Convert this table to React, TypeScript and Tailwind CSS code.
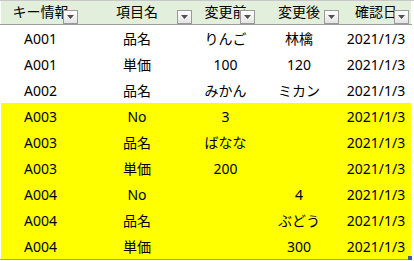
const cols = [
  { title: "キー情報", w: "w-[79px]" },
  { title: "項目名", w: "w-[114px]" },
  { title: "変更前", w: "w-[63px]" },
  { title: "変更後", w: "w-[84px]" },
  { title: "確認日", w: "w-[70px]" },
];

const rows: { cells: string[]; hl: boolean }[] = [
  { cells: ["A001", "品名", "りんご", "林檎", "2021/1/3"], hl: false },
  { cells: ["A001", "単価", "100", "120", "2021/1/3"], hl: false },
  { cells: ["A002", "品名", "みかん", "ミカン", "2021/1/3"], hl: false },
  { cells: ["A003", "No", "3", "", "2021/1/3"], hl: true },
  { cells: ["A003", "品名", "ばなな", "", "2021/1/3"], hl: true },
  { cells: ["A003", "単価", "200", "", "2021/1/3"], hl: true },
  { cells: ["A004", "No", "", "4", "2021/1/3"], hl: true },
  { cells: ["A004", "品名", "", "ぶどう", "2021/1/3"], hl: true },
  { cells: ["A004", "単価", "", "300", "2021/1/3"], hl: true },
];

const FilterButton = () => (
  <div className="absolute right-[2px] bottom-0 w-[15px] h-[14px] border border-[#9a9a9a] bg-gradient-to-b from-white to-[#e4e4e4] flex items-center justify-center">
    <svg width="7" height="4" viewBox="0 0 7 4">
      <path d="M0 0h7L3.5 4z" fill="#505050" />
    </svg>
  </div>
);

export default function App() {
  return (
    <div
      className="w-[414px] h-[261px] bg-white overflow-hidden text-black text-[14px]"
      style={{ fontFamily: '"Noto Sans", "Noto Sans CJK JP", sans-serif' }}
    >
      <div className="flex h-[24px] border-t border-[#c8c8c8]">
        <div className="w-[1px]" />
        {cols.map((c) => (
          <div key={c.title} className={`${c.w} relative overflow-hidden bg-[#e2efda] flex justify-center items-start`}>
            <span className="whitespace-nowrap leading-[22px]">{c.title}</span>
            <FilterButton />
          </div>
        ))}
      </div>
      <div className="h-[1px] w-[412px] bg-[#9e9e9e]" />
      {rows.map((r, i) => (
        <div key={i} className="flex h-[26px]">
          <div className="w-[1px] bg-white" />
          {r.cells.map((t, j) => (
            <div
              key={j}
              className={`${cols[j].w} flex items-center justify-center whitespace-nowrap ${r.hl ? "bg-[#ffff00]" : "bg-white"}`}
            >
              {t}
            </div>
          ))}
        </div>
      ))}
      <div className="relative h-[1px] w-[411px] bg-[#9e9e9e]">
        <div className="absolute right-[-1px] bottom-0 w-[4px] h-[4px] bg-[#3f5fb0]" />
      </div>
    </div>
  );
}
